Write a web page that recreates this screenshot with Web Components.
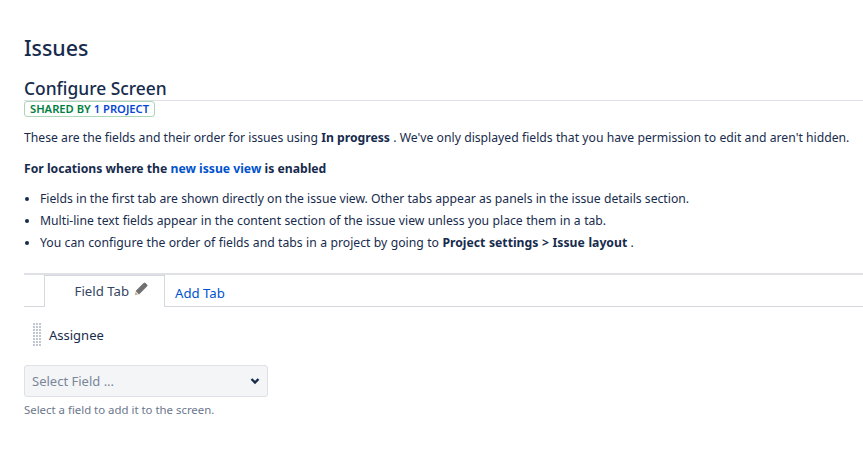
<!DOCTYPE html>
<html>
<head>
<meta charset="utf-8">
<title>Configure Screen</title>
<style>
    html, body { margin: 0; background: #fff; }
    body {
        font-family: "Noto Sans", "Open Sans", sans-serif;
        font-size: 12.2px;
        color: #172b4d;
        overflow: hidden;
    }
</style>
</head>
<body>
<screen-page>
    <h-title slot="title">Issues</h-title>
    <screen-header slot="header" heading="Configure Screen">
        <shared-lozenge>SHARED BY <b>1 PROJECT</b></shared-lozenge>
    </screen-header>
    <screen-notes slot="notes"></screen-notes>
    <tab-bar slot="tabs" active="Field Tab" add="Add Tab"></tab-bar>
    <field-row slot="fields">Assignee</field-row>
    <field-select slot="select" placeholder="Select Field ..." hint="Select a field to add it to the screen."></field-select>
</screen-page>

<script>
function shadow(el, html) {
    el.attachShadow({ mode: "open" });
    el.shadowRoot.innerHTML = html;
}

class ScreenPage extends HTMLElement {
    constructor() {
        super();
        shadow(this, `
            <style>
                :host { display: block; height: 455px; padding: 34px 0 0 24px; box-sizing: border-box; }
                .tabs { display: block; margin-top: 19px; }
            </style>
            <slot name="title"></slot>
            <slot name="header"></slot>
            <slot name="notes"></slot>
            <div class="tabs"><slot name="tabs"></slot></div>
            <slot name="fields"></slot>
            <slot name="select"></slot>
        `);
    }
}

class HTitle extends HTMLElement {
    constructor() {
        super();
        shadow(this, `
            <style>
                :host { display: block; font-size: 21.4px; line-height: 28px; font-weight: 500; color: #172b4d; }
            </style>
            <slot></slot>
        `);
    }
}

class ScreenHeader extends HTMLElement {
    constructor() {
        super();
        shadow(this, `
            <style>
                :host { display: block; margin-top: 14px; }
                h2 { margin: 0; font-size: 17.4px; line-height: 24px; font-weight: 500; color: #172b4d; border-bottom: 1px solid #dfe1e6; height: 24px; }
                .sub { display: block; height: 18px; }
            </style>
            <h2>${this.getAttribute("heading")}</h2>
            <div class="sub"><slot></slot></div>
        `);
    }
}

class SharedLozenge extends HTMLElement {
    constructor() {
        super();
        shadow(this, `
            <style>
                :host { display: inline-block; box-sizing: border-box; height: 16px; line-height: 14px; padding: 0 5px; border: 1px solid #a9d7b8; border-radius: 3px; font-size: 11.2px; font-weight: 600; color: #00803f; vertical-align: top; }
                ::slotted(b) { color: #0747d6; font-weight: 600; }
            </style>
            <slot></slot>
        `);
    }
}

class ScreenNotes extends HTMLElement {
    constructor() {
        super();
        shadow(this, `
            <style>
                :host { display: block; line-height: 20px; }
                p { margin: 0; }
                p.intro { margin-top: 9px; white-space: nowrap; }
                p.intro span { word-spacing: 0.1px; }
                p.loc { margin-top: 11px; }
                a { color: #0052cc; text-decoration: none; }
                ul { margin: 9px 0 0; padding: 0 0 0 16px; }
                li { height: 22px; line-height: 22px; white-space: nowrap; }
                li.wide { word-spacing: 0.26px; }
                li b { word-spacing: 0.5px; }
                b { font-weight: 700; }
            </style>
            <p class="intro">These are the fields and their order for issues using <b>In progress</b> <span>. We've only displayed fields that you have permission to edit and aren't hidden.</span></p>
            <p class="loc"><b>For locations where the <a href="#">new issue view</a> is enabled</b></p>
            <ul>
                <li>Fields in the first tab are shown directly on the issue view. Other tabs appear as panels in the issue details section.</li>
                <li class="wide">Multi-line text fields appear in the content section of the issue view unless you place them in a tab.</li>
                <li class="wide">You can configure the order of fields and tabs in a project by going to <b>Project settings &gt; Issue layout</b> .</li>
            </ul>
        `);
    }
}

class TabBar extends HTMLElement {
    constructor() {
        super();
        shadow(this, `
            <style>
                :host { display: flex; align-items: flex-end; height: 31px; border-top: 2px solid #dfe1e6; border-bottom: 1px solid #d5d7dc; padding-left: 20px; font-size: 13.2px; }
                .tab { display: flex; box-sizing: border-box; gap: 5px; align-items: flex-start; justify-content: flex-end; width: 121px; height: 32px; margin-bottom: -1px; padding: 6px 16px 0 0; background: #fff; border: 1px solid #d5d7dc; border-bottom: 0; color: #344563; line-height: 18px; }
                svg { width: 14px; height: 14px; flex: none; margin: 0; }
                a { color: #0052cc; text-decoration: none; margin-left: 10px; line-height: 20px; margin-bottom: 3px; }
            </style>
            <div class="tab">
                <span>${this.getAttribute("active")}</span>
                <svg viewBox="0 0 14 14">
                    <path fill="#707070" d="M11 .5l2.7 2.7-1 1.5L5 12.4 1.6 9l7.7-7.7z"/>
                    <path fill="#c9b18f" d="M.8 13.2l.7-3.4 2.7 2.7z"/>
                </svg>
            </div>
            <a href="#">${this.getAttribute("add")}</a>
        `);
    }
}

class FieldRow extends HTMLElement {
    constructor() {
        super();
        shadow(this, `
            <style>
                :host { display: flex; align-items: center; gap: 8px; height: 56px; padding: 0 0 2px 9px; font-size: 13px; }
                svg { width: 8px; height: 24px; display: block; }
            </style>
            <svg viewBox="0 0 8 24">
                <defs><pattern id="dots" width="3" height="3" patternUnits="userSpaceOnUse"><rect width="2" height="2" fill="#c1c7d0"/></pattern></defs>
                <rect width="8" height="24" fill="url(#dots)"/>
            </svg>
            <slot></slot>
        `);
    }
}

class FieldSelect extends HTMLElement {
    constructor() {
        super();
        shadow(this, `
            <style>
                :host { display: block; font-size: 13px; }
                .box { display: flex; align-items: center; justify-content: space-between; box-sizing: border-box; width: 244px; height: 32px; padding: 0 7px; background: #f4f5f7; border: 1px solid #dfe1e6; border-radius: 3px; color: #7a869a; }
                svg { width: 10px; height: 8px; }
                .hint { margin-top: 5px; font-size: 11.4px; line-height: 16px; color: #6b778c; }
            </style>
            <div class="box">
                <span>${this.getAttribute("placeholder")}</span>
                <svg viewBox="0 0 10 8"><path fill="none" stroke="#172b4d" stroke-width="2.4" d="M1.5 2l3.5 3.5L8.5 2"/></svg>
            </div>
            <div class="hint">${this.getAttribute("hint")}</div>
        `);
    }
}

customElements.define("screen-page", ScreenPage);
customElements.define("h-title", HTitle);
customElements.define("screen-header", ScreenHeader);
customElements.define("shared-lozenge", SharedLozenge);
customElements.define("screen-notes", ScreenNotes);
customElements.define("tab-bar", TabBar);
customElements.define("field-row", FieldRow);
customElements.define("field-select", FieldSelect);
</script>
</body>
</html>
